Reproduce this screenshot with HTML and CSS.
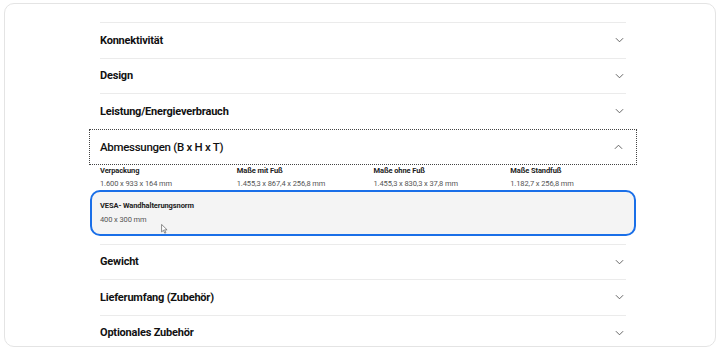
FILE: index.html
```html
<!DOCTYPE html>
<html lang="de">
<head>
  <meta charset="UTF-8">
  <meta name="viewport" content="width=device-width, initial-scale=1.0">
  <title>Technische Daten</title>
  <link rel="stylesheet" href="styles.css">
</head>
<body>
  <div class="card">
    <ul class="spec-list">
      <li class="spec">
        <div class="spec-head">Konnektivität
          <svg class="chevron" viewBox="0 0 10 6"><path d="M1 1l4 4 4-4"/></svg>
        </div>
      </li>
      <li class="spec">
        <div class="spec-head">Design
          <svg class="chevron" viewBox="0 0 10 6"><path d="M1 1l4 4 4-4"/></svg>
        </div>
      </li>
      <li class="spec">
        <div class="spec-head">Leistung/Energieverbrauch
          <svg class="chevron" viewBox="0 0 10 6"><path d="M1 1l4 4 4-4"/></svg>
        </div>
      </li>
      <li class="spec is-open">
        <div class="spec-head focused">Abmessungen (B x H x T)
          <svg class="chevron" viewBox="0 0 10 6"><path d="M1 5l4-4 4 4"/></svg>
        </div>
        <div class="spec-body">
          <div class="spec-grid">
            <div class="item">
              <p class="item-label">Verpackung</p>
              <p class="item-value">1.600 x 933 x 164 mm</p>
            </div>
            <div class="item">
              <p class="item-label">Maße mit Fuß</p>
              <p class="item-value">1.455,3 x 867,4 x 256,8 mm</p>
            </div>
            <div class="item">
              <p class="item-label">Maße ohne Fuß</p>
              <p class="item-value">1.455,3 x 830,3 x 37,8 mm</p>
            </div>
            <div class="item">
              <p class="item-label">Maße Standfuß</p>
              <p class="item-value">1.182,7 x 256,8 mm</p>
            </div>
          </div>
          <div class="item highlight">
            <p class="item-label">VESA- Wandhalterungsnorm</p>
            <p class="item-value">400 x 300 mm</p>
            <svg class="cursor" viewBox="0 0 8 12"><path d="M0.5 0.5v9l2.2-2 1.6 3.5 1.4-0.6-1.6-3.4h3z"/></svg>
          </div>
        </div>
      </li>
      <li class="spec">
        <div class="spec-head">Gewicht
          <svg class="chevron" viewBox="0 0 10 6"><path d="M1 1l4 4 4-4"/></svg>
        </div>
      </li>
      <li class="spec">
        <div class="spec-head">Lieferumfang (Zubehör)
          <svg class="chevron" viewBox="0 0 10 6"><path d="M1 1l4 4 4-4"/></svg>
        </div>
      </li>
      <li class="spec">
        <div class="spec-head">Optionales Zubehör
          <svg class="chevron" viewBox="0 0 10 6"><path d="M1 1l4 4 4-4"/></svg>
        </div>
      </li>
    </ul>
  </div>
</body>
</html>
```

FILE: styles.css
```css
* {
  box-sizing: border-box;
}

body {
  margin: 0;
  background-color: #fff;
  color: #111;
  font-family: 'Roboto', 'Liberation Sans', sans-serif;
}

.card {
  margin: 3px 4px 0;
  height: 344px;
  border: 1px solid #e4e4e4;
  border-radius: 10px;
  overflow: hidden;
  padding-top: 18px;
}

.spec-list {
  list-style: none;
  margin: 0 0 0 95px;
  padding: 0;
  width: 526px;
}

.spec {
  border-top: 1px solid #ebebeb;
}

.spec-head {
  display: flex;
  justify-content: space-between;
  align-items: center;
  height: 34.5px;
  padding-right: 2px;
  font-size: 11px;
  font-weight: 700;
  letter-spacing: -0.2px;
}

.chevron {
  width: 9px;
  height: 6px;
  fill: none;
  stroke: #555;
  stroke-width: 1;
}

.is-open {
  border-top-color: transparent;
}

.spec-head.focused {
  margin: -1px -11px 0;
  height: 36px;
  padding: 0 13px 0 10px;
  border: 1px dotted #444;
  font-size: 11.5px;
  font-weight: 500;
  letter-spacing: -0.3px;
}

.spec-body {
  padding-bottom: 8px;
}

.spec-grid {
  display: grid;
  grid-template-columns: repeat(4, 1fr);
  column-gap: 21px;
  padding: 1px 0 2px;
}

.item-label {
  margin: 0;
  font-size: 7.5px;
  font-weight: 700;
  letter-spacing: -0.1px;
  color: #222;
}

.item-value {
  margin: 4px 0 0;
  font-size: 7.5px;
  letter-spacing: -0.1px;
  color: #555;
}

.highlight {
  position: relative;
  margin: 0 -10px;
  padding: 9px 8px 10px;
  background-color: #f4f4f4;
  border: 2px solid #1a6fe8;
  border-radius: 10px;
}

.highlight .item-value {
  margin-top: 5px;
}

.cursor {
  position: absolute;
  left: 69px;
  top: 32px;
  width: 7px;
  height: 10px;
  fill: #fff;
  stroke: #555;
  stroke-width: 0.8;
}
```
